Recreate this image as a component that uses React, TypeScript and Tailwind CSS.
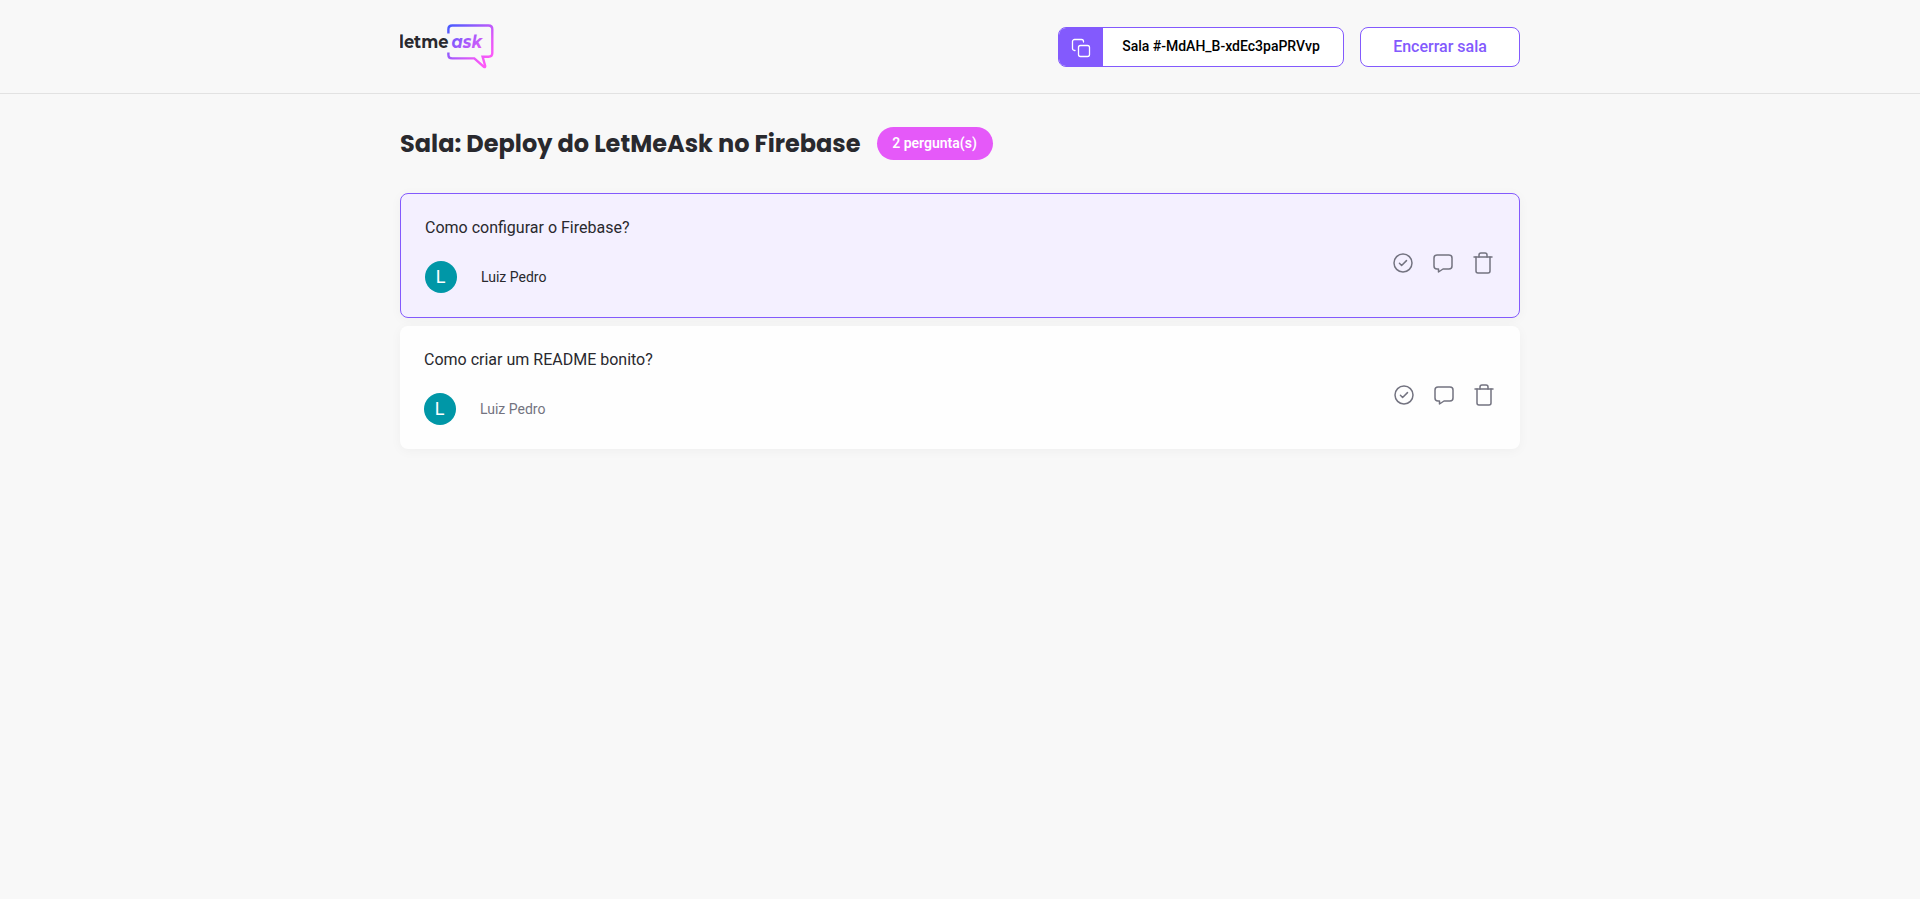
import React from "react";

const roboto = "font-[Roboto,'Liberation_Sans',sans-serif]";

function Logo() {
  return (
    <svg width="95" height="45" viewBox="0 0 95 45" fill="none" aria-label="letmeask">
      <defs>
        <linearGradient id="brand" x1="48" y1="2" x2="86" y2="40" gradientUnits="userSpaceOnUse">
          <stop stopColor="#485BFF" />
          <stop offset="0.75" stopColor="#E35AF9" />
          <stop offset="1" stopColor="#FF59F8" />
        </linearGradient>
      </defs>
      <text x="-1" y="24.3" textLength="49.5" lengthAdjust="spacingAndGlyphs" fontFamily="Montserrat, Poppins, sans-serif" fontWeight="700" fontSize="17.5" fill="#29292E">letme</text>
      <text x="51.5" y="24.3" textLength="30.5" lengthAdjust="spacingAndGlyphs" fontFamily="Montserrat, Inter, sans-serif" fontWeight="700" fontStyle="italic" fontSize="17.5" fill="url(#brand)">ask</text>
      <path d="M48.4 9.4V5.2Q48.4 1.5 52.2 1.5H88.5Q92.3 1.5 92.3 5.2V29Q92.3 32.7 88.5 32.7H82.6L85.2 42Q85.4 43.6 84 42.9L74.3 34.4H52.2Q48.4 34.4 48.4 30.7V28.6" stroke="url(#brand)" strokeWidth="2.4" />
    </svg>
  );
}

function CopyIcon() {
  return (
    <svg width="20" height="20" viewBox="0 0 20 20" fill="none" stroke="white" strokeWidth="1.3" strokeLinecap="round" strokeLinejoin="round">
      <rect x="7.5" y="7.5" width="11" height="11" rx="2" />
      <path d="M4 12.5H3.5A2 2 0 0 1 1.5 10.5V3.5A2 2 0 0 1 3.5 1.5H10.5A2 2 0 0 1 12.5 3.5V4" />
    </svg>
  );
}

const iconProps = {
  width: 24,
  height: 24,
  viewBox: "0 0 24 24",
  fill: "none",
  stroke: "#737380",
  strokeWidth: 1.5,
  strokeLinecap: "round" as const,
  strokeLinejoin: "round" as const,
};

function Actions() {
  return (
    <div className="flex h-7 gap-4 self-start -mt-2.5">
      <button aria-label="Marcar como respondida" className="h-6">
        <svg {...iconProps}>
          <circle cx="12" cy="12" r="9" />
          <path d="M8.44 12.34L10.61 14.5L15.49 9.6" />
        </svg>
      </button>
      <button aria-label="Destacar" className="h-6">
        <svg {...iconProps}>
          <path d="M12 18H18C19.657 18 21 16.657 21 15V7C21 5.343 19.657 4 18 4H6C4.343 4 3 5.343 3 7V15C3 16.657 4.343 18 6 18H7.5V21L12 18Z" />
        </svg>
      </button>
      <button aria-label="Remover" className="h-6">
        <svg {...iconProps}>
          <path d="M3 6H21" />
          <path d="M8 6V4A2 2 0 0 1 10 2H14A2 2 0 0 1 16 4V6M19 6V20A2 2 0 0 1 17 22H7A2 2 0 0 1 5 20V6" />
        </svg>
      </button>
    </div>
  );
}

function Question({ text, author, highlighted = false }: { text: string; author: string; highlighted?: boolean }) {
  return (
    <div className={`rounded-lg p-6 shadow-[0_2px_12px_rgba(0,0,0,0.04)] ${highlighted ? "border border-[#835afd] bg-[#f4f0ff]" : "bg-[#fefefe]"}`}>
      <p className="h-[19px] text-base leading-[19px] text-[#29292e]">{text}</p>
      <footer className="mt-6 flex h-8 items-center justify-between">
        <div className="flex items-center gap-6">
          <span className="flex size-8 items-center justify-center rounded-full bg-[#0097a7] pr-px text-[18px] leading-8 text-white">L</span>
          <span className={`text-sm leading-4 ${highlighted ? "text-[#29292e]" : "text-[#737380]"}`}>{author}</span>
        </div>
        <Actions />
      </footer>
    </div>
  );
}

export default function App() {
  return (
    <div className={`min-h-screen bg-[#f8f8f8] text-[#29292e] ${roboto}`}>
      <header className="border-b border-[#e2e2e2] py-6">
        <div className="mx-auto flex h-[45px] w-[1120px] items-center justify-between">
          <Logo />
          <div className="flex gap-4">
            <button className="flex h-10 w-[286px] overflow-hidden rounded-lg border border-[#835afd] bg-white">
              <span className="flex h-full w-11 items-center justify-center bg-[#835afd] pt-0.5">
                <CopyIcon />
              </span>
              <span className="flex-1 self-center pr-1 pb-0.5 text-center text-sm leading-4 font-medium text-black">Sala #-MdAH_B-xdEc3paPRVvp</span>
            </button>
            <button className="h-10 w-40 rounded-lg border border-[#835afd] bg-white text-base leading-[19px] font-medium text-[#835afd]">Encerrar sala</button>
          </div>
        </div>
      </header>
      <main className="mx-auto w-[1120px]">
        <div className="flex items-start pt-8 pb-[31px]">
          <h1 className="w-[461px] text-2xl leading-9 font-bold whitespace-nowrap font-[Poppins,Inter,sans-serif]">Sala: Deploy do LetMeAsk no Firebase</h1>
          <span className="mt-px ml-4 w-[116px] rounded-full bg-[#e559f9] py-2 pr-px text-center text-sm leading-[17px] font-semibold text-white">2 pergunta(s)</span>
        </div>
        <div className="flex flex-col gap-2">
          <Question text="Como configurar o Firebase?" author="Luiz Pedro" highlighted />
          <Question text="Como criar um README bonito?" author="Luiz Pedro" />
        </div>
      </main>
    </div>
  );
}
